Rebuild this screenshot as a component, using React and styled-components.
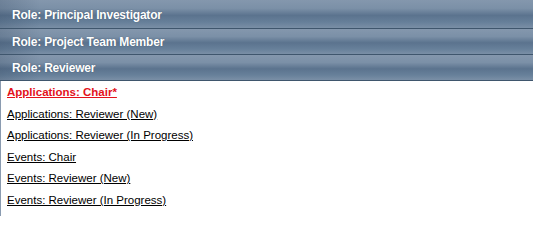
import React from 'react';
import styled, { createGlobalStyle } from 'styled-components';

const GlobalStyle = createGlobalStyle`
  html, body {
    margin: 0;
    padding: 0;
    background: #ffffff;
  }
`;

const roles = ['Role: Principal Investigator', 'Role: Project Team Member', 'Role: Reviewer'];

const links = [
  { label: 'Applications: Chair*', active: true },
  { label: 'Applications: Reviewer (New)' },
  { label: 'Applications: Reviewer (In Progress)' },
  { label: 'Events: Chair' },
  { label: 'Events: Reviewer (New)' },
  { label: 'Events: Reviewer (In Progress)' },
];

export default function App() {
  return (
    <>
      <GlobalStyle />
      <Panel>
        {roles.map((r, i) => (
          <RoleBar key={r} first={i === 0 ? 1 : 0}>
            {r}
          </RoleBar>
        ))}
        <LinkList>
          {links.map((l) => (
            <LinkItem key={l.label} href="#" active={l.active ? 1 : 0}>
              {l.label}
            </LinkItem>
          ))}
        </LinkList>
      </Panel>
    </>
  );
}

const Panel = styled.div`
  width: 533px;
  height: 216px;
  display: flex;
  flex-direction: column;
  font-family: 'Liberation Sans', Arial, sans-serif;
`;

const RoleBar = styled.div`
  height: ${({ first }) => (first ? '27px' : '25px')};
  flex-shrink: 0;
  border-bottom: 1px solid #3f566d;
  display: flex;
  align-items: center;
  padding-left: 12px;
  padding-top: ${({ first }) => (first ? '1px' : '0')};
  color: #ffffff;
  font-size: 12px;
  font-weight: 700;
  letter-spacing: -0.2px;
  text-shadow: 0 0 1px rgba(40, 60, 80, 0.6);
  background:
    linear-gradient(90deg, rgba(50, 70, 95, 0.25) 0px, rgba(50, 70, 95, 0) 40px),
    linear-gradient(180deg, #8497ad 0%, #7b90a7 30%, #5b738e 55%, #67809a 80%, #7a8fa6 100%);
`;

const LinkList = styled.div`
  flex: 1;
  display: flex;
  flex-direction: column;
  align-items: flex-start;
  padding: 1px 0 0 6px;
  border-left: 1px solid #8a9bb0;
`;

const LinkItem = styled.a`
  line-height: 21.6px;
  font-size: 11.5px;
  color: ${({ active }) => (active ? '#e3121b' : '#000000')};
  font-weight: ${({ active }) => (active ? 700 : 400)};
  text-decoration: underline;
`;
